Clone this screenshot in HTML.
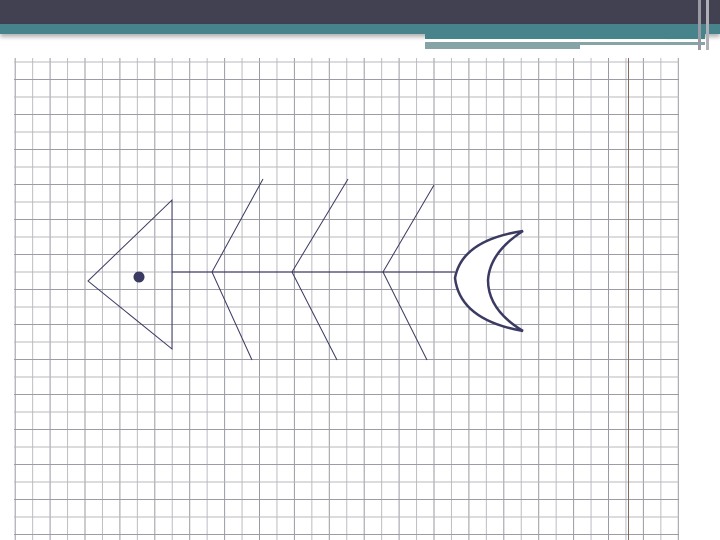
<!DOCTYPE html>
<html><head><style>
body{margin:0;width:720px;height:540px;overflow:hidden;background:#fff;position:relative}
div{position:absolute}
</style></head><body>
<svg width="720" height="540" style="position:absolute;left:0;top:0">
<defs>
<pattern id="gv" x="14.7" y="0" width="34.9" height="540" patternUnits="userSpaceOnUse">
<line x1="0.5" y1="0" x2="0.5" y2="540" stroke="#9a9aa2" stroke-width="1"/>
<line x1="17.95" y1="0" x2="17.95" y2="540" stroke="#bcbcc2" stroke-width="1"/>
</pattern>
<pattern id="gh" x="0" y="61.5" width="720" height="35" patternUnits="userSpaceOnUse">
<line x1="0" y1="0.5" x2="720" y2="0.5" stroke="#b8b8be" stroke-width="1"/>
<line x1="0" y1="18" x2="720" y2="18" stroke="#9c9ca4" stroke-width="1"/>
</pattern>
</defs>
<rect x="14" y="58" width="665" height="482" fill="url(#gv)"/>
<rect x="14" y="61" width="665" height="476" fill="url(#gh)"/>
<line x1="628.5" y1="58" x2="628.5" y2="540" stroke="#8a6a5a"/>
<g fill="none" stroke="#3a3a62">
<polygon points="88,281 172,200 172,349" stroke-width="1"/>
<line x1="172" y1="272" x2="455" y2="272" stroke-width="1.3"/>
<polyline points="263,179 212,272 252,360" stroke-width="1"/>
<polyline points="348,179 292,272 337,360" stroke-width="1"/>
<polyline points="434,185 383,272 427,360" stroke-width="1"/>
<path d="M523,231 Q462,240 455,278 Q460,320 523,331 Q488,310 488,280 Q490,252 523,231 Z" stroke-width="2.5" fill="#fff"/>
</g>
<circle cx="139" cy="277" r="5.5" fill="#3a3a62"/>
</svg>
<div style="left:0;top:0;width:720px;height:24px;background:#414152"></div>
<div style="left:0;top:24px;width:720px;height:10px;background:#46838b;box-shadow:0 3px 4px rgba(0,0,0,.3)"></div>
<div style="left:425px;top:34px;width:280px;height:5px;background:#46838b"></div>
<div style="left:425px;top:39px;width:241px;height:3px;background:#fff"></div>
<div style="left:425px;top:42px;width:280px;height:7px;background:#86a4a6"></div>
<div style="left:580px;top:45px;width:125px;height:4px;background:#fff"></div>
<div style="left:698px;top:0;width:3px;height:50px;background:#9a9aa4"></div>
<div style="left:706px;top:0;width:3px;height:50px;background:#b0b0b8"></div>
</body></html>
